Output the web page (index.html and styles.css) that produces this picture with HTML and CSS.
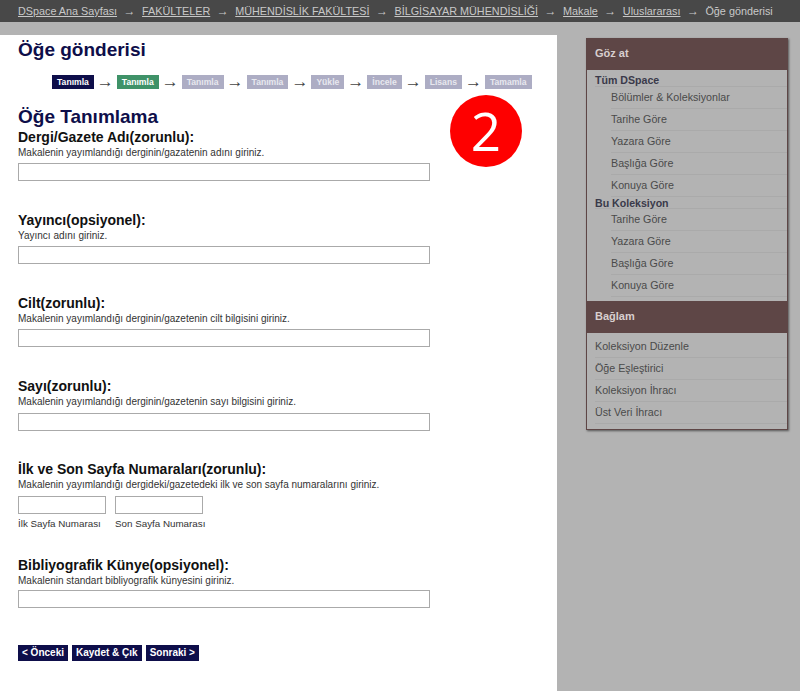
FILE: index.html
```html
<!DOCTYPE html>
<html lang="tr">
<head>
    <meta charset="UTF-8">
    <meta name="viewport" content="width=device-width, initial-scale=1.0">
    <title>Öğe gönderisi</title>
    <link rel="stylesheet" href="styles.css">
</head>
<body>

<div class="trail">
    <a href="#">DSpace Ana Sayfası</a><span class="trail-arrow">→</span>
    <a href="#">FAKÜLTELER</a><span class="trail-arrow">→</span>
    <a href="#">MÜHENDİSLİK FAKÜLTESİ</a><span class="trail-arrow">→</span>
    <a href="#">BİLGİSAYAR MÜHENDİSLİĞİ</a><span class="trail-arrow">→</span>
    <a href="#">Makale</a><span class="trail-arrow">→</span>
    <a href="#">Uluslararası</a><span class="trail-arrow">→</span>
    <span>Öğe gönderisi</span>
</div>

<div class="page">
    <div class="main">
        <h1>Öğe gönderisi</h1>

        <div class="steps">
            <span class="step step-done">Tanımla</span><span class="step-arrow">→</span>
            <span class="step step-now">Tanımla</span><span class="step-arrow">→</span>
            <span class="step">Tanımla</span><span class="step-arrow">→</span>
            <span class="step">Tanımla</span><span class="step-arrow">→</span>
            <span class="step">Yükle</span><span class="step-arrow">→</span>
            <span class="step">İncele</span><span class="step-arrow">→</span>
            <span class="step">Lisans</span><span class="step-arrow">→</span>
            <span class="step">Tamamla</span>
        </div>

        <div class="badge">2</div>

        <h2>Öğe Tanımlama</h2>

        <div class="field">
            <label>Dergi/Gazete Adı(zorunlu):</label>
            <p class="hint">Makalenin yayımlandığı derginin/gazatenin adını giriniz.</p>
            <input type="text" class="input-wide">
        </div>

        <div class="field">
            <label>Yayıncı(opsiyonel):</label>
            <p class="hint">Yayıncı adını giriniz.</p>
            <input type="text" class="input-wide">
        </div>

        <div class="field">
            <label>Cilt(zorunlu):</label>
            <p class="hint">Makalenin yayımlandığı derginin/gazetenin cilt bilgisini giriniz.</p>
            <input type="text" class="input-wide">
        </div>

        <div class="field field-low">
            <label>Sayı(zorunlu):</label>
            <p class="hint">Makalenin yayımlandığı derginin/gazetenin sayı bilgisini giriniz.</p>
            <input type="text" class="input-wide">
        </div>

        <div class="field field-low field-pages">
            <label>İlk ve Son Sayfa Numaraları(zorunlu):</label>
            <p class="hint">Makalenin yayımlandığı dergideki/gazetedeki ilk ve son sayfa numaralarını giriniz.</p>
            <div class="page-inputs">
                <div class="page-input">
                    <input type="text" class="input-small">
                    <span>İlk Sayfa Numarası</span>
                </div>
                <div class="page-input">
                    <input type="text" class="input-small">
                    <span>Son Sayfa Numarası</span>
                </div>
            </div>
        </div>

        <div class="field field-tight">
            <label>Bibliyografik Künye(opsiyonel):</label>
            <p class="hint">Makalenin standart bibliyografik künyesini giriniz.</p>
            <input type="text" class="input-wide">
        </div>

        <div class="buttons">
            <button class="button">&lt; Önceki</button>
            <button class="button">Kaydet &amp; Çık</button>
            <button class="button">Sonraki &gt;</button>
        </div>
    </div>

    <div class="side">
        <div class="side-box">
            <h3>Göz at</h3>
            <div class="side-group">Tüm DSpace</div>
            <a class="side-link" href="#">Bölümler &amp; Koleksiyonlar</a>
            <a class="side-link" href="#">Tarihe Göre</a>
            <a class="side-link" href="#">Yazara Göre</a>
            <a class="side-link" href="#">Başlığa Göre</a>
            <a class="side-link" href="#">Konuya Göre</a>
            <div class="side-group side-group-next">Bu Koleksiyon</div>
            <a class="side-link" href="#">Tarihe Göre</a>
            <a class="side-link" href="#">Yazara Göre</a>
            <a class="side-link" href="#">Başlığa Göre</a>
            <a class="side-link" href="#">Konuya Göre</a>
            <h3 class="side-second">Bağlam</h3>
            <div class="side-list">
                <a class="side-item" href="#">Koleksiyon Düzenle</a>
                <a class="side-item" href="#">Öğe Eşleştirici</a>
                <a class="side-item" href="#">Koleksiyon İhracı</a>
                <a class="side-item" href="#">Üst Veri İhracı</a>
            </div>
        </div>
    </div>
</div>

</body>
</html>
```

FILE: styles.css
```css
html, body {
    height: 691px;
    overflow: hidden;
}
body {
    margin: 0;
    background-color: #b3b3b3;
    font-family: "Liberation Sans", Arial, sans-serif;
    color: #000;
}

.trail {
    display: flex;
    height: 22px;
    padding-left: 18px;
    background-color: #484848;
    color: #c8c8c8;
    font-size: 10.8px;
    line-height: 23px;
    white-space: nowrap;
}
.trail a {
    color: #c8c8c8;
}
.trail-arrow {
    width: 25px;
    font-size: 12px;
    text-align: center;
}

.page {
    display: flex;
    padding-top: 13px;
}

.main {
    position: relative;
    box-sizing: border-box;
    width: 557px;
    height: 656px;
    padding-left: 18px;
    background-color: #fff;
}
h1 {
    margin: 0;
    color: #0e0e4a;
    font-size: 19px;
    line-height: 30px;
}
h2 {
    margin: 16px 0 0;
    color: #0e0e4a;
    font-size: 19px;
    line-height: 24px;
}

.steps {
    display: flex;
    align-items: center;
    height: 14px;
    margin: 10px 0 0 34px;
}
.step {
    padding: 0 5px;
    background-color: #adadc4;
    color: #e8e8ef;
    font-size: 8.6px;
    font-weight: bold;
    line-height: 14px;
    white-space: nowrap;
}
.step-done {
    background-color: #0e0e4a;
    color: #fff;
}
.step-now {
    background-color: #3f9268;
    color: #fff;
}
.step-arrow {
    width: 23px;
    color: #444;
    font-size: 17px;
    line-height: 14px;
    text-align: center;
}

.badge {
    position: absolute;
    left: 450px;
    top: 60px;
    width: 72px;
    height: 72px;
    border-radius: 50%;
    background-color: #fe0000;
    color: #fff;
    font-family: "Open Sans", sans-serif;
    font-size: 53px;
    line-height: 71px;
    text-align: center;
}

.field {
    height: 83px;
}
.field:first-of-type {
    margin-top: 20px;
}
.field-pages {
    height: 96px;
}
.field-low .hint {
    margin-bottom: 5px;
}
.field-tight .hint {
    margin-bottom: 3px;
}
label {
    display: block;
    color: #111;
    font-size: 14px;
    font-weight: bold;
    line-height: 17px;
}
.hint {
    margin: 0 0 4px;
    color: #333;
    font-size: 10px;
    line-height: 13px;
}
input {
    display: block;
    box-sizing: border-box;
    height: 18px;
    margin: 0;
    padding: 0;
    border: 1px solid #aaa;
    background-color: #fff;
}
.input-wide {
    width: 412px;
}
.input-small {
    width: 88px;
}
.page-inputs {
    display: flex;
    gap: 9px;
}
.page-input span {
    display: block;
    margin-top: 3px;
    color: #333;
    font-size: 9.8px;
    line-height: 13px;
    white-space: nowrap;
}

.buttons {
    display: flex;
    gap: 4px;
    margin-top: 5px;
}
.button {
    height: 16px;
    padding: 0 4px;
    border: none;
    background-color: #0e0e4a;
    color: #fff;
    font-family: "Liberation Sans", Arial, sans-serif;
    font-size: 10px;
    font-weight: bold;
    line-height: 16px;
}

.side {
    padding: 3px 0 0 29px;
}
.side-box {
    box-sizing: border-box;
    width: 202px;
    height: 392px;
    border: 1px solid #5e4646;
    border-top: none;
    background-color: #b3b3b3;
    box-shadow: 1px 1px 2px #555;
}
.side-box h3 {
    height: 32px;
    margin: 0 -1px;
    padding-left: 9px;
    background-color: #5e4646;
    color: #d8cfcf;
    font-size: 11px;
    line-height: 31px;
}
.side-box .side-second {
    margin-top: 4px;
}
.side-group {
    height: 13px;
    margin-left: 8px;
    padding-top: 3px;
    border-bottom: 1px solid #aaa;
    color: #3a3a4a;
    font-size: 10.6px;
    font-weight: bold;
    line-height: 14px;
}
.side-group-next {
    height: 11px;
    padding-top: 0;
    line-height: 12px;
}
.side-link {
    display: block;
    height: 21px;
    margin-left: 24px;
    border-bottom: 1px solid #aaa;
    color: #4a4a4a;
    font-size: 10.7px;
    line-height: 21px;
    text-decoration: none;
}
.side-list {
    padding-top: 3px;
}
.side-item {
    display: block;
    height: 21px;
    margin-left: 8px;
    border-bottom: 1px solid #aaa;
    color: #4a4a4a;
    font-size: 10.7px;
    line-height: 21px;
    text-decoration: none;
}
```
